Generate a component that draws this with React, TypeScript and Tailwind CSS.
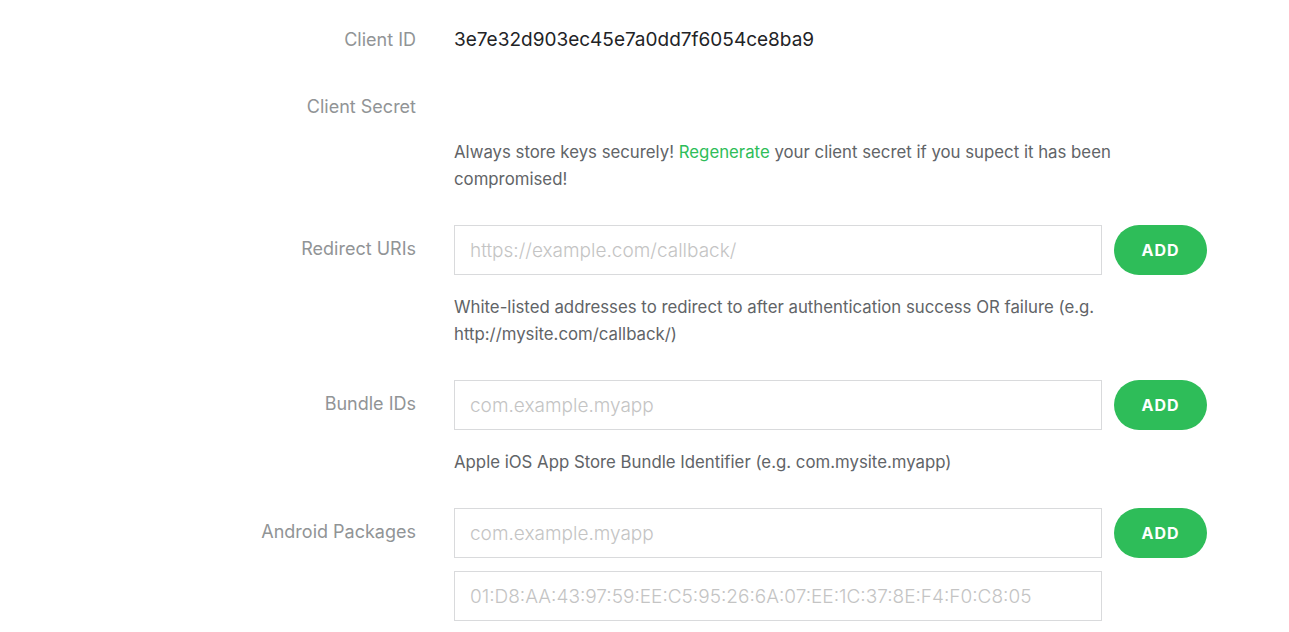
import React from "react";

const font = { fontFamily: "Inter, 'Noto Sans', sans-serif" };

function Label({ children }: { children: React.ReactNode }) {
  return (
    <div className="w-[416px] shrink-0 text-right text-[18px] leading-[27px] text-[#919496]">
      {children}
    </div>
  );
}

function InputRow({ placeholder, button = true }: { placeholder: string; button?: boolean }) {
  return (
    <div className="flex items-center gap-[12px]">
      <input
        placeholder={placeholder}
        className="h-[50px] w-[648px] border border-[#d9dadc] bg-white px-[15px] text-[19px] font-light text-[#333] outline-none placeholder:text-[#c4c4c4]"
      />
      {button && (
        <button className="h-[50px] w-[93px] rounded-full bg-[#2ebd59] text-[16px] font-bold tracking-[1px] text-white">
          ADD
        </button>
      )}
    </div>
  );
}

function Help({ children }: { children: React.ReactNode }) {
  return (
    <p className="mt-[19px] w-[666px] text-[16.8px] leading-[27px] text-[#616467]">{children}</p>
  );
}

export default function App() {
  return (
    <div className="min-h-[632px] w-full bg-white pt-[26px]" style={font}>
      {/* Client ID */}
      <div className="flex">
        <Label>Client ID</Label>
        <div className="ml-[38px] text-[19px] leading-[27px] text-[#222326]">
          3e7e32d903ec45e7a0dd7f6054ce8ba9
        </div>
      </div>

      {/* Client Secret */}
      <div className="mt-[40px] flex">
        <Label>Client Secret</Label>
        <div className="ml-[38px]">
          <div className="h-[27px]" />
          <Help>
            Always store keys securely! <span className="text-[#2ebd59]">Regenerate</span> your
            client secret if you supect it has been compromised!
          </Help>
        </div>
      </div>

      {/* Redirect URIs */}
      <div className="mt-[32px] flex">
        <div className="pt-[10px]">
          <Label>Redirect URIs</Label>
        </div>
        <div className="ml-[38px]">
          <InputRow placeholder="https://example.com/callback/" />
          <Help>
            White-listed addresses to redirect to after authentication success OR failure (e.g.
            http://mysite.com/callback/)
          </Help>
        </div>
      </div>

      {/* Bundle IDs */}
      <div className="mt-[32px] flex">
        <div className="pt-[10px]">
          <Label>Bundle IDs</Label>
        </div>
        <div className="ml-[38px]">
          <InputRow placeholder="com.example.myapp" />
          <Help>Apple iOS App Store Bundle Identifier (e.g. com.mysite.myapp)</Help>
        </div>
      </div>

      {/* Android Packages */}
      <div className="mt-[32px] flex">
        <div className="pt-[10px]">
          <Label>Android Packages</Label>
        </div>
        <div className="ml-[38px] flex flex-col gap-[13px]">
          <InputRow placeholder="com.example.myapp" />
          <InputRow
            placeholder="01:D8:AA:43:97:59:EE:C5:95:26:6A:07:EE:1C:37:8E:F4:F0:C8:05"
            button={false}
          />
        </div>
      </div>
    </div>
  );
}
